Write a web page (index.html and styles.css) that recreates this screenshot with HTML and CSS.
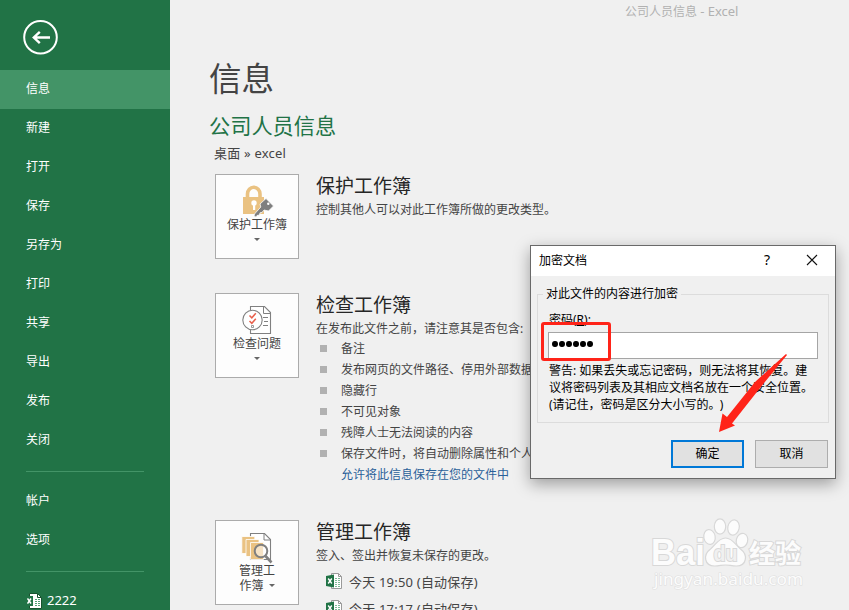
FILE: index.html
```html
<!DOCTYPE html>
<html lang="zh-CN">
<head>
<meta charset="utf-8">
<title>公司人员信息 - Excel</title>
<link rel="stylesheet" href="styles.css">
</head>
<body>
<svg class="defs" width="0" height="0">
  <symbol id="xls" viewBox="0 0 16 16">
    <path d="M5.500.5h7l3 3v12h-10z" fill="#fff" stroke="#9a9a9a"/>
    <path d="M12.500.500v3h3" fill="none" stroke="#9a9a9a"/>
    <path d="M9 5.500h2M12 5.500h2M9 7.500h2M12 7.500h2M9 9.500h2M12 9.500h2M9 11.500h2M12 11.500h2M9 13.500h2M12 13.500h2" stroke="#7fba98"/>
    <path d="M0 3 8 1.500v13L0 13z" fill="#217346"/>
    <path d="M2.200 5.500l3.600 5M5.800 5.500l-3.600 5" stroke="#fff" stroke-width="1.400"/>
  </symbol>
</svg>
<div class="app">
  <nav class="sidebar">
    <div class="back">
      <svg width="36" height="36" viewBox="0 0 36 36" fill="none" stroke="#fff" stroke-width="2"><circle cx="17.500" cy="17.300" r="16.300"/><path d="M27 17.500H11M16.800 11.800l-6 5.700 6 5.700" stroke-width="2.400"/></svg>
    </div>
    <a class="item active">信息</a>
    <a class="item">新建</a>
    <a class="item">打开</a>
    <a class="item">保存</a>
    <a class="item">另存为</a>
    <a class="item">打印</a>
    <a class="item">共享</a>
    <a class="item">导出</a>
    <a class="item">发布</a>
    <a class="item">关闭</a>
    <hr class="rule">
    <a class="item low">帐户</a>
    <a class="item low">选项</a>
    <hr class="rule">
    <a class="item recent">
      <svg width="15" height="16" viewBox="0 0 15 16"><path d="M2.500.5h8l4 4v11h-12z" fill="#fff" stroke="#17532f"/><path d="M10.500.5v4h4" fill="none" stroke="#17532f"/><path d="M0 3h6v10H0z" fill="#217346"/><path d="M.5 5.500l3.500 5M4 5.500l-3.500 5" stroke="#fff" stroke-width="1.500"/><path d="M8 6.500h2M11 6.500h2M8 8.500h2M11 8.500h2M8 10.500h2M11 10.500h2M8 12.500h2M11 12.500h2" stroke="#4fa173"/></svg>
      <span>2222</span>
    </a>
  </nav>
  <main class="main">
    <div class="window-title">公司人员信息 <span>- Excel</span></div>
    <h1>信息</h1>
    <h2>公司人员信息</h2>
    <div class="path">桌面 » excel</div>

    <section class="section protect">
      <div class="tile">
        <svg width="32" height="32" viewBox="0 0 32 32">
          <path d="M5.500 13V9a6 6.500 0 0 1 12.500 0v4" fill="none" stroke="#eac282" stroke-width="3.600"/>
          <path d="M1 12h21v17H1z" fill="#eac282"/>
          <circle cx="12" cy="18" r="2.700" fill="#fff"/><path d="M11 19h2.200v6H11z" fill="#fff"/>
          <path d="M24 13.500l7.500 7.500-5 5-4.500-1-2 2.500-2 .3-.5 2.200-2.500.5-.5 1.500-2.500-.5.500-2.500 6.300-7-.8-3z" fill="#7f7f7f" stroke="#fdfdfd" stroke-width=".8"/>
          <circle cx="26.300" cy="18.800" r="1.200" fill="#fff"/>
        </svg>
        <span>保护工作簿</span><i class="caret"></i>
      </div>
      <div class="info">
        <h3>保护工作簿</h3>
        <p>控制其他人可以对此工作簿所做的更改类型。</p>
      </div>
    </section>

    <section class="section inspect">
      <div class="tile">
        <svg width="32" height="32" viewBox="0 0 32 32" fill="none" stroke="#808080">
          <path d="M8.500 2.500h14l6 6v21h-20z" fill="#fff" stroke-width="1.100"/><path d="M21.500 2.500v7h7M21 13.500h5M22 17.500h4M21 21.500h5" />
          <circle cx="10.500" cy="16" r="9.700" fill="#fff" stroke-width="1.100"/>
          <path d="M7.500 11.500l2.300 2.300 4-4.500M7.500 17l2.300 2.300 4-4.500" stroke="#e8604c" stroke-width="1.500"/><path d="M9.500 21.500h2v2h-2z" stroke-width=".8"/>
        </svg>
        <span>检查问题</span><i class="caret"></i>
      </div>
      <div class="info">
        <h3>检查工作簿</h3>
        <p>在发布此文件之前，请注意其是否包含:</p>
        <ul>
          <li>备注</li>
          <li>发布网页的文件路径、停用外部数据</li>
          <li>隐藏行</li>
          <li>不可见对象</li>
          <li>残障人士无法阅读的内容</li>
          <li>保存文件时，将自动删除属性和个人</li>
        </ul>
        <a class="link">允许将此信息保存在您的文件中</a>
      </div>
    </section>

    <section class="section manage">
      <div class="tile">
        <svg width="32" height="32" viewBox="0 0 32 32">
          <path d="M8.500 2.500h14l6 6v20h-20z" fill="#fff" stroke="#808080" stroke-width="1.100"/><path d="M22 2.500v6.500h6.500" fill="none" stroke="#808080"/>
          <g fill="#eac282" stroke="#fff" stroke-width=".8"><path d="M-.2 5.500h13v17h-13z"/><path d="M4 8.500h13v17H4z"/><path d="M8.500 11.500h13v17h-13z"/></g>
          <circle cx="19" cy="20" r="6.300" fill="#fff" fill-opacity=".55" stroke="#808080" stroke-width="2"/><path d="M23.500 25l6 6.500" stroke="#808080" stroke-width="2.600"/>
        </svg>
        <span>管理工</span><span class="last">作簿<i class="caret"></i></span>
      </div>
      <div class="info">
        <h3>管理工作簿</h3>
        <p>签入、签出并恢复未保存的更改。</p>
        <div class="version"><svg width="16" height="16"><use href="#xls"/></svg><span>今天 19:50 (自动保存)</span></div>
        <div class="version"><svg width="16" height="16"><use href="#xls"/></svg><span>今天 17:17 (自动保存)</span></div>
      </div>
    </section>
  </main>
</div>

<div class="watermark">
  <svg width="170" height="90" viewBox="0 0 170 90">
    <g fill="#fcfcfc" stroke="#d8d8d8" stroke-width="1.200">
      <text class="wm-logo" x="9" y="47" textLength="54" lengthAdjust="spacingAndGlyphs">Bai</text>
      <ellipse cx="67.500" cy="19" rx="5.700" ry="7.500" transform="rotate(-10 67.500 19)"/>
      <ellipse cx="78" cy="8.500" rx="5.700" ry="7.700"/>
      <ellipse cx="91.500" cy="9.500" rx="5.700" ry="7.700" transform="rotate(12 91.500 9.500)"/>
      <ellipse cx="100" cy="22.500" rx="5.700" ry="7.200" transform="rotate(15 100 22.500)"/>
      <path d="M83.500 20c7 0 10 7 15 11 8 6 6 17-4 17-5 0-7-1-11-1s-6 1-11 1c-10 0-12-11-4-17 5-4 8-11 15-11z"/>
      <text class="wm-du" x="71.500" y="43" textLength="24" lengthAdjust="spacingAndGlyphs">du</text>
      <text class="wm-cn" x="107" y="45" textLength="52" lengthAdjust="spacingAndGlyphs">经验</text>
      <text class="wm-url" x="12" y="67" textLength="149" lengthAdjust="spacingAndGlyphs">jingyan.baidu.com</text>
    </g>
  </svg>
</div>

<div class="dialog">
  <header class="titlebar">
    <span class="name">加密文档</span>
    <span class="help">?</span>
    <svg width="12" height="12" viewBox="0 0 12 12" stroke="#111" stroke-width="1.100"><path d="M1 1l10 10M11 1L1 11"/></svg>
  </header>
  <div class="group">
    <div class="legend">对此文件的内容进行加密</div>
    <label>密码(<u>R</u>):</label>
    <div class="field"><i></i><i></i><i></i><i></i><i></i><i></i></div>
    <p class="warning">警告: 如果丢失或忘记密码，则无法将其恢复。建<br>议将密码列表及其相应文档名放在一个安全位置。<br>(请记住，密码是区分大小写的<span class="stop">。</span>)</p>
  </div>
  <footer class="actions"><button class="primary">确定</button><button>取消</button></footer>
  <div class="marker"></div>
  <svg class="arrow" width="80" height="85" viewBox="0 0 80 85"><path d="M76 3 45 31 17 66 12.500 62.500 9 81 25 74.500 22 72.500 50 37 77 4z" fill="#ff2419"/></svg>
</div>
</body>
</html>
```
FILE: styles.css
```css
* { box-sizing: border-box; }
body {
  margin: 0;
  width: 849px;
  height: 610px;
  overflow: hidden;
  position: relative;
  background: #f0f0f0;
  color: #444;
  font: 12px/20px "Noto Sans", "Noto Sans CJK SC", sans-serif;
  white-space: nowrap;
}
h1, h2, h3, p, ul { margin: 0; padding: 0; font-weight: 400; }
.defs { display: block; }
.app { display: flex; height: 610px; overflow: hidden; }

.sidebar { width: 170px; flex: none; height: 610px; overflow: hidden; background: #217346; color: #fff; }
.back { height: 70px; padding: 20px 0 0 23px; }
.back svg { display: block; }
.item { display: flex; align-items: center; height: 39px; padding: 0 0 2px 26px; }
.active { background: #439467; }
.rule { height: 1px; border: 0; margin: 11px 26px 9px; background: #439467; }
.low { padding-bottom: 0; }
.low + .rule { margin-top: 12px; margin-bottom: 9px; }
.item.recent { padding-left: 27px; gap: 5px; font-size: 13px; }
.item.recent svg { position: relative; top: 1px; }

.main { flex: 1; min-width: 0; padding-left: 40px; }
.window-title { height: 22px; padding: 1px 0 0 415px; color: #b1b1b1; }
.window-title span { font-size: 13px; }
h1 { margin: 32px 0 0 -1px; font-size: 32.5px; line-height: 49px; }
h2 { margin: 8px 0 0 -1px; font-size: 21.2px; line-height: 30px; color: #217346; }
.path { padding-left: 4px; font-size: 13px; line-height: 24px; letter-spacing: .2px; }
.section { display: flex; gap: 17px; padding-left: 5px; }
.protect { height: 119px; margin-top: 9px; }
.inspect { height: 227px; }
.tile {
  display: flex; flex-direction: column; align-items: center;
  width: 84px; height: 85px; padding: 10px 0 0;
  border: 1px solid #ababab; background: #fdfdfd;
}
.tile svg { display: block; flex: none; overflow: visible; margin-left: 1px; }
.tile span { line-height: 15px; }
.caret { display: block; border: 3px solid transparent; border-top-color: #666; border-bottom: 0; margin-top: 6px; }
.last { display: flex; gap: 5px; }
h3 { height: 25px; font-size: 19px; line-height: 25px; color: #262626; }
.info p { height: 20px; line-height: 22px; }
ul { list-style: none; }
li { display: flex; align-items: center; height: 21px; padding-left: 4px; gap: 14px; }
li::before { content: ""; width: 7px; height: 7px; background: #b1b1b1; }
.link { display: block; padding-left: 25px; line-height: 21px; color: #2a6099; }
.version { display: flex; align-items: center; gap: 7px; height: 27px; padding-left: 10px; font-size: 13px; letter-spacing: .2px; }
.version svg { position: relative; top: -1px; }
.manage .info p { margin-bottom: 3px; }

.dialog {
  position: absolute; left: 530px; top: 245px; width: 306px; height: 234px;
  border: 1px solid #696969; background: #f0f0f0; color: #000;
  box-shadow: 0 5px 15px rgba(0, 0, 0, .35);
}
.titlebar { display: flex; align-items: center; height: 30px; padding: 0 17px 2px 8px; background: #fff; }
.name { flex: 1; line-height: 22px; padding-top: 2px; }
.help { margin-right: 36px; font-size: 14px; }
.group { margin: 18px 6px 0; height: 129px; border: 1px solid #dcdcdc; padding: 0 10px; }
.legend { width: max-content; height: 20px; margin: -11px 0 0 -5px; padding: 0 3px; background: #f0f0f0; }
label { display: block; margin-top: 6px; padding-left: 1px; line-height: 20px; }
.field { display: flex; align-items: center; gap: 1.5px; height: 27px; margin-top: 2px; padding: 0 0 4px 3px; border: 1px solid #a5a5a5; background: #fff; }
.field i { width: 5.5px; height: 6px; border-radius: 50%; background: #000; }
.warning { margin-top: 3px; padding-left: 1px; line-height: 17px; }
.stop { margin-right: 5px; }
.actions { display: flex; justify-content: flex-end; gap: 11px; margin: 17px 7px 0; }
button { width: 73px; height: 28px; padding: 0; border: 1px solid #adadad; background: #e1e1e1; color: #000; font: inherit; }
.primary { border: 2px solid #0078d7; }
.marker { position: absolute; left: 10px; top: 76px; width: 70px; height: 39px; border: 3px solid #ff2419; border-radius: 3px; }
.arrow { position: absolute; left: 179px; top: 105px; }

.watermark { position: absolute; left: 642px; top: 518px; }
.watermark svg { display: block; overflow: visible; }
.watermark text { paint-order: stroke; stroke-width: 2px; }
.wm-logo { font: 700 36px "Liberation Sans", sans-serif; }
.watermark .wm-du { font: 700 22px "Liberation Sans", sans-serif; fill: #f0f0f0; }
.wm-cn { font: 700 26px "Noto Sans CJK SC", sans-serif; }
.watermark .wm-url { font: 17px "Noto Sans", sans-serif; stroke: #dfdfdf; stroke-width: 1.2px; }
```
